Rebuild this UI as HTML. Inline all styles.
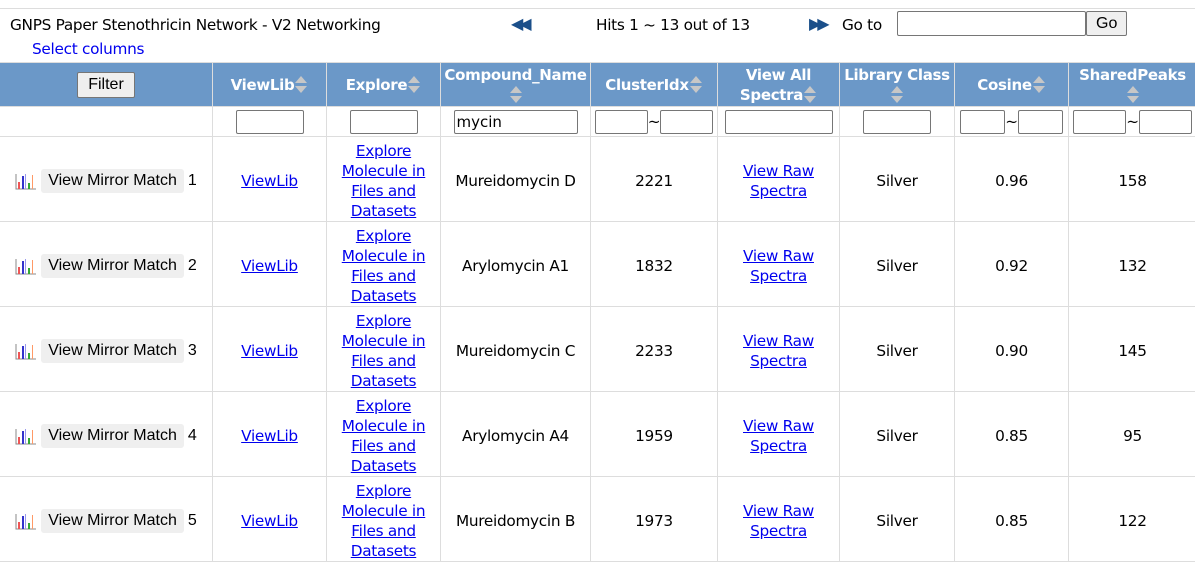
<!DOCTYPE html>
<html><head><meta charset="utf-8"><style>
body{margin:0;width:1195px;height:557px;overflow:hidden;background:#fff;font-family:"DejaVu Sans",sans-serif;font-size:15.3px;color:#000;letter-spacing:-0.3px}
.top{position:absolute;left:0;top:8px;width:1195px;border-top:1px solid #ddd}
.t{position:absolute;white-space:nowrap}
a{color:#00e;text-decoration:underline}
table{position:absolute;left:-1px;top:62px;border-collapse:collapse;table-layout:fixed;width:1197px}
td,th{border:1px solid #ddd;text-align:center;padding:0;overflow:hidden}
th{background:#6b98c8;color:#fff;height:43px;font-size:15px;line-height:20px;font-weight:bold;border-color:#ddd}
tr.f td{height:29px}
tr.r td{height:81px;line-height:20px;padding-top:3px}
.ar{display:inline-block;width:14px;height:18px;vertical-align:middle;position:relative}
.ar:before{content:"";position:absolute;left:1px;top:0;border:6px solid transparent;border-bottom:7px solid #c7c7c7;border-top:0}
.ar:after{content:"";position:absolute;left:1px;top:10px;border:6px solid transparent;border-top:7px solid #c7c7c7;border-bottom:0}
input{box-sizing:border-box;height:24px;border:1px solid #767676;border-radius:2px;font:15px "DejaVu Sans",sans-serif;padding:0 2px;vertical-align:middle}
.btn{display:inline-block;background:#efefef;border:1px solid #767676;border-radius:2px;font-family:"Liberation Sans",sans-serif;font-size:16px;padding:2px 10px;letter-spacing:0;color:#000}
.vm{display:inline-block;background:#efefef;border-radius:3px;font-family:"Liberation Sans",sans-serif;font-size:16px;padding:2px 7px;letter-spacing:0;vertical-align:middle}
.n{font-family:"Liberation Sans",sans-serif;font-size:16px;letter-spacing:0;vertical-align:middle;margin-left:4px}
.ic{display:inline-block;vertical-align:middle;margin-right:4px}
</style></head><body>
<div class="top"></div>
<div class="t" style="left:10px;top:16px">GNPS Paper Stenothricin Network - V2 Networking</div>
<div class="t" style="left:32px;top:40px;color:#00e">Select columns</div>
<div class="t" style="left:511px;top:14px;color:#1b4f8a;font-size:16px;font-weight:bold;letter-spacing:-4px">◀◀</div>
<div class="t" style="left:596px;top:16px">Hits 1 ~ 13 out of 13</div>
<div class="t" style="left:809px;top:14px;color:#1b4f8a;font-size:16px;font-weight:bold;letter-spacing:-4px">▶▶</div>
<div class="t" style="left:842px;top:16px">Go to</div>
<input style="position:absolute;left:897px;top:11px;width:189px;height:25px">
<span class="btn" style="position:absolute;left:1086px;top:11px;padding:2px 9px;height:19px;line-height:19px">Go</span>
<table>
<colgroup><col style="width:213px"><col style="width:114px"><col style="width:114px"><col style="width:150px"><col style="width:127px"><col style="width:122px"><col style="width:115px"><col style="width:114px"><col style="width:128px"></colgroup>
<tr><th style="background:#6b98c8"><span class="btn" style="font-weight:normal">Filter</span></th>
<th>ViewLib<span class="ar"></span></th>
<th>Explore<span class="ar"></span></th>
<th>Compound_Name<br><span class="ar"></span></th>
<th>ClusterIdx<span class="ar"></span></th>
<th>View All<br>Spectra<span class="ar"></span></th>
<th>Library Class<br><span class="ar"></span></th>
<th>Cosine<span class="ar"></span></th>
<th>SharedPeaks<br><span class="ar"></span></th></tr>
<tr class="f"><td></td>
<td><input style="width:68px"></td>
<td><input style="width:68px"></td>
<td><input style="width:124px" value="mycin"></td>
<td><input style="width:53px">~<input style="width:53px"></td>
<td><input style="width:108px"></td>
<td><input style="width:68px"></td>
<td><input style="width:45px">~<input style="width:45px"></td>
<td><input style="width:53px">~<input style="width:53px"></td></tr>
<tr class="r"><td><svg class="ic" width="22" height="18" viewBox="0 0 22 18"><path d="M1 2V17H21" stroke="#888" fill="none"/><rect x="3" y="10" width="2" height="7" fill="#e55"/><rect x="7" y="4" width="2" height="13" fill="#33c"/><rect x="10" y="2" width="1" height="15" fill="#99e"/><rect x="13" y="11" width="2" height="6" fill="#3a3"/><rect x="17" y="3" width="1" height="14" fill="#f96"/></svg><span class="vm">View Mirror Match</span><span class="n">1</span></td><td><a>ViewLib</a></td><td><a>Explore<br>Molecule in<br>Files and<br>Datasets</a></td><td>Mureidomycin D</td><td>2221</td><td><a>View Raw<br>Spectra</a></td><td>Silver</td><td>0.96</td><td>158</td></tr>
<tr class="r"><td><svg class="ic" width="22" height="18" viewBox="0 0 22 18"><path d="M1 2V17H21" stroke="#888" fill="none"/><rect x="3" y="10" width="2" height="7" fill="#e55"/><rect x="7" y="4" width="2" height="13" fill="#33c"/><rect x="10" y="2" width="1" height="15" fill="#99e"/><rect x="13" y="11" width="2" height="6" fill="#3a3"/><rect x="17" y="3" width="1" height="14" fill="#f96"/></svg><span class="vm">View Mirror Match</span><span class="n">2</span></td><td><a>ViewLib</a></td><td><a>Explore<br>Molecule in<br>Files and<br>Datasets</a></td><td>Arylomycin A1</td><td>1832</td><td><a>View Raw<br>Spectra</a></td><td>Silver</td><td>0.92</td><td>132</td></tr>
<tr class="r"><td><svg class="ic" width="22" height="18" viewBox="0 0 22 18"><path d="M1 2V17H21" stroke="#888" fill="none"/><rect x="3" y="10" width="2" height="7" fill="#e55"/><rect x="7" y="4" width="2" height="13" fill="#33c"/><rect x="10" y="2" width="1" height="15" fill="#99e"/><rect x="13" y="11" width="2" height="6" fill="#3a3"/><rect x="17" y="3" width="1" height="14" fill="#f96"/></svg><span class="vm">View Mirror Match</span><span class="n">3</span></td><td><a>ViewLib</a></td><td><a>Explore<br>Molecule in<br>Files and<br>Datasets</a></td><td>Mureidomycin C</td><td>2233</td><td><a>View Raw<br>Spectra</a></td><td>Silver</td><td>0.90</td><td>145</td></tr>
<tr class="r"><td><svg class="ic" width="22" height="18" viewBox="0 0 22 18"><path d="M1 2V17H21" stroke="#888" fill="none"/><rect x="3" y="10" width="2" height="7" fill="#e55"/><rect x="7" y="4" width="2" height="13" fill="#33c"/><rect x="10" y="2" width="1" height="15" fill="#99e"/><rect x="13" y="11" width="2" height="6" fill="#3a3"/><rect x="17" y="3" width="1" height="14" fill="#f96"/></svg><span class="vm">View Mirror Match</span><span class="n">4</span></td><td><a>ViewLib</a></td><td><a>Explore<br>Molecule in<br>Files and<br>Datasets</a></td><td>Arylomycin A4</td><td>1959</td><td><a>View Raw<br>Spectra</a></td><td>Silver</td><td>0.85</td><td>95</td></tr>
<tr class="r"><td><svg class="ic" width="22" height="18" viewBox="0 0 22 18"><path d="M1 2V17H21" stroke="#888" fill="none"/><rect x="3" y="10" width="2" height="7" fill="#e55"/><rect x="7" y="4" width="2" height="13" fill="#33c"/><rect x="10" y="2" width="1" height="15" fill="#99e"/><rect x="13" y="11" width="2" height="6" fill="#3a3"/><rect x="17" y="3" width="1" height="14" fill="#f96"/></svg><span class="vm">View Mirror Match</span><span class="n">5</span></td><td><a>ViewLib</a></td><td><a>Explore<br>Molecule in<br>Files and<br>Datasets</a></td><td>Mureidomycin B</td><td>1973</td><td><a>View Raw<br>Spectra</a></td><td>Silver</td><td>0.85</td><td>122</td></tr>
</table>
</body></html>
